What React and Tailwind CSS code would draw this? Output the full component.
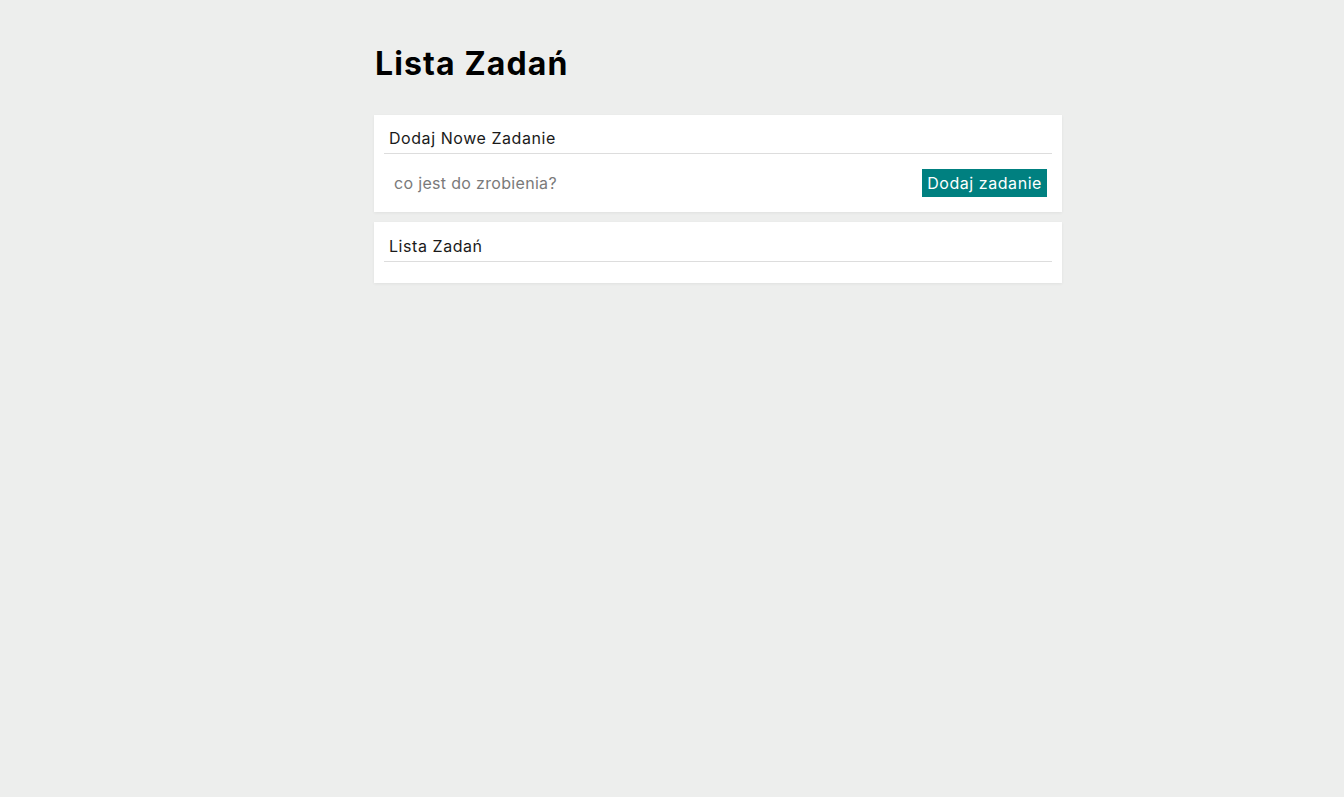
import React, { useState } from 'react';

const font = { fontFamily: 'Inter, "Noto Sans", sans-serif' };

const Card = ({ title, extraTop, children }) => (
  <div className="bg-white shadow-[0_1px_3px_rgba(0,0,0,0.06)] px-[10px] pt-[10px]">
    <div
      className={`border-b border-[#dddddd] px-[5px] pb-[3px] text-[16px] leading-6 tracking-[0.035em] text-[#1a1a1a] ${
        extraTop ? 'pt-[2px]' : 'pt-px'
      }`}
    >
      {title}
    </div>
    {children}
  </div>
);

const App = () => {
  const [value, setValue] = useState('');

  return (
    <div className="min-h-screen bg-[#edeeed]" style={font}>
      <div className="ml-[374px] w-[688px] pt-[40px]">
        <h1 className="text-[32px] leading-[48px] font-bold tracking-[0.035em] text-black pl-px">Lista Zadań</h1>

        <div className="mt-[27px] flex flex-col gap-[10px]">
          <Card title="Dodaj Nowe Zadanie">
            <form
              className="flex items-center justify-between py-[15px] pr-[5px]"
              onSubmit={(e) => e.preventDefault()}
            >
              <input
                className="flex-1 px-[10px] text-[16px] leading-6 tracking-[0.02em] outline-none placeholder:text-[#7a7a7a] bg-transparent"
                placeholder="co jest do zrobienia?"
                value={value}
                onChange={(e) => setValue(e.target.value)}
              />
              <button
                type="submit"
                className="h-[28px] px-[5px] bg-[#008080] text-white text-[16px] leading-6 tracking-[0.035em]"
              >
                Dodaj zadanie
              </button>
            </form>
          </Card>

          <Card title="Lista Zadań" extraTop>
            <div className="h-[21px]" />
          </Card>
        </div>
      </div>
    </div>
  );
};

export default App;
